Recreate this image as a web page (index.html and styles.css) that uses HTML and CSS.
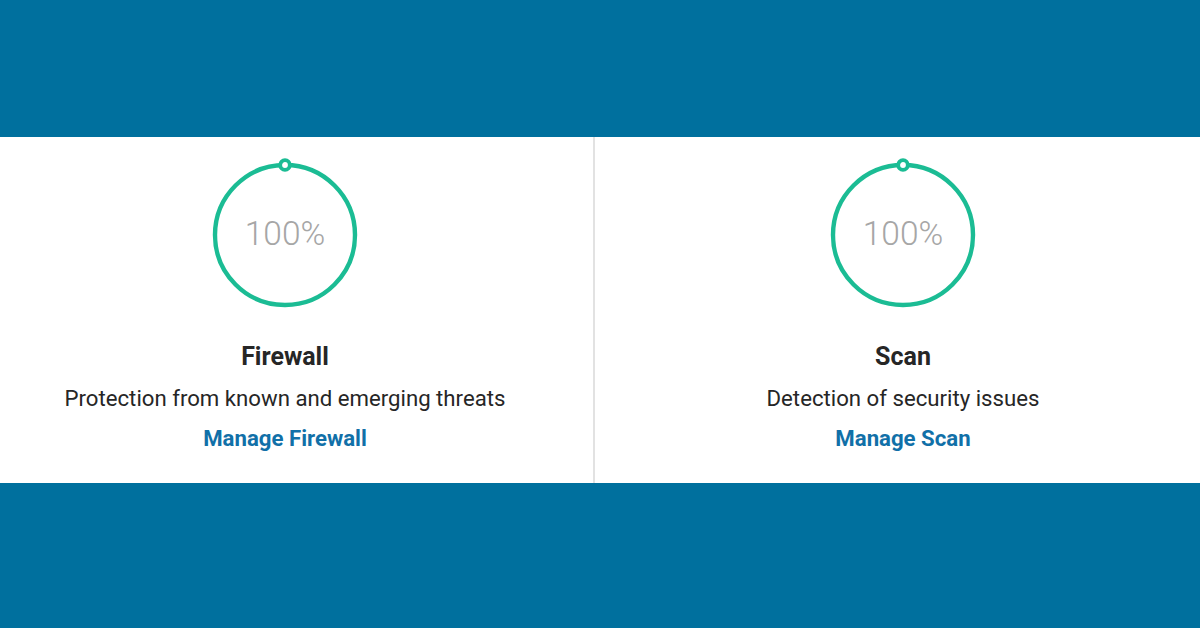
FILE: index.html
```html
<!DOCTYPE html>
<html lang="en">
<head>
<meta charset="utf-8">
<title>Security</title>
<link rel="stylesheet" href="styles.css">
</head>
<body>
<div class="band band-top"></div>
<section class="panel">
  <div class="card card-left">
    <div class="gauge">
      <svg class="ring" width="156" height="156" viewBox="0 0 156 156">
        <circle cx="78" cy="78" r="70" fill="none" stroke="#1bbc94" stroke-width="4.4"/>
        <circle cx="78" cy="8" r="4.8" fill="#fff" stroke="#1bbc94" stroke-width="3.8"/>
      </svg>
      <span class="pct">100%</span>
    </div>
    <h2 class="title">Firewall</h2>
    <p class="desc">Protection from known and emerging threats</p>
    <a class="link" href="#">Manage Firewall</a>
  </div>
  <div class="card card-right">
    <div class="gauge">
      <svg class="ring" width="156" height="156" viewBox="0 0 156 156">
        <circle cx="78" cy="78" r="70" fill="none" stroke="#1bbc94" stroke-width="4.4"/>
        <circle cx="78" cy="8" r="4.8" fill="#fff" stroke="#1bbc94" stroke-width="3.8"/>
      </svg>
      <span class="pct">100%</span>
    </div>
    <h2 class="title">Scan</h2>
    <p class="desc">Detection of security issues</p>
    <a class="link" href="#">Manage Scan</a>
  </div>
</section>
<div class="band band-bottom"></div>
</body>
</html>
```

FILE: styles.css
```css
html, body {
  margin: 0;
  padding: 0;
}
body {
  width: 1200px;
  height: 628px;
  overflow: hidden;
  font-family: Roboto, "Liberation Sans", sans-serif;
  background: #00709e;
}
.band {
  background: #00709e;
}
.band-top {
  height: 137px;
}
.band-bottom {
  height: 145px;
}
.panel {
  height: 346px;
  background: #fff;
  display: grid;
  grid-template-columns: 595px 1fr;
}
.card {
  display: flex;
  flex-direction: column;
  align-items: center;
  padding-top: 20px;
  box-sizing: border-box;
}
.card-left {
  border-right: 2px solid #e2e2e2;
  padding-right: 23px;
}
.card-right {
  padding-left: 11px;
}
.gauge {
  display: grid;
  place-items: center;
  width: 156px;
  height: 156px;
}
.gauge > * {
  grid-area: 1 / 1;
}
.ring {
  display: block;
}
.pct {
  font-size: 33.5px;
  font-weight: 300;
  color: #a6a6a6;
  line-height: 1;
  margin-top: -2px;
}
.title {
  margin: 28.5px 0 0;
  font-size: 25px;
  line-height: 30px;
  font-weight: 700;
  color: #262626;
}
.desc {
  margin: 13px 0 0;
  font-size: 22.2px;
  line-height: 26px;
  color: #262626;
}
.link {
  margin-top: 14.5px;
  font-size: 22.2px;
  line-height: 26px;
  font-weight: 700;
  color: #1170a8;
  text-decoration: none;
}
```
